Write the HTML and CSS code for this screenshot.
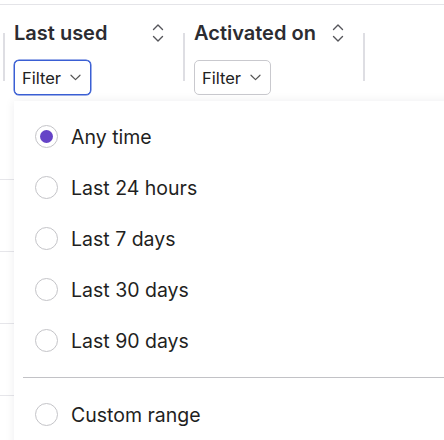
FILE: index.html
```html
<!DOCTYPE html>
<html lang="en">
<head>
    <meta charset="UTF-8">
    <meta name="viewport" content="width=device-width, initial-scale=1.0">
    <title>Members</title>
    <link rel="stylesheet" href="styles.css">
</head>
<body>
    <div class="table">
        <div class="table-head">
            <div class="th">
                <div class="th-sep"></div>
                <div class="th-body">
                    <div class="th-top">
                        <span class="th-label">Last used</span>
                        <svg class="sort-icon" width="12" height="20" viewBox="0 0 12 20"><path d="M1.5 6.5 6 2l4.5 4.5M1.5 13.5 6 18l4.5-4.5" fill="none" stroke="#55555a" stroke-width="1.4" stroke-linecap="round" stroke-linejoin="round"/></svg>
                    </div>
                    <button class="filter-btn is-open">Filter
                        <svg width="11" height="7" viewBox="0 0 11 7"><path d="M1 1.2 5.5 5.6 10 1.2" fill="none" stroke="#555" stroke-width="1.2" stroke-linecap="round" stroke-linejoin="round"/></svg>
                    </button>
                </div>
            </div>
            <div class="th">
                <div class="th-sep"></div>
                <div class="th-body">
                    <div class="th-top">
                        <span class="th-label">Activated on</span>
                        <svg class="sort-icon" width="12" height="20" viewBox="0 0 12 20"><path d="M1.5 6.5 6 2l4.5 4.5M1.5 13.5 6 18l4.5-4.5" fill="none" stroke="#55555a" stroke-width="1.4" stroke-linecap="round" stroke-linejoin="round"/></svg>
                    </div>
                    <button class="filter-btn">Filter
                        <svg width="11" height="7" viewBox="0 0 11 7"><path d="M1 1.2 5.5 5.6 10 1.2" fill="none" stroke="#555" stroke-width="1.2" stroke-linecap="round" stroke-linejoin="round"/></svg>
                    </button>
                </div>
            </div>
            <div class="th">
                <div class="th-sep"></div>
            </div>
        </div>
        <div class="table-row"></div>
        <div class="table-row"></div>
        <div class="table-row"></div>
        <div class="table-row"></div>
        <div class="table-row"></div>

        <div class="menu">
            <label class="menu-item"><span class="radio is-checked"></span>Any time</label>
            <label class="menu-item"><span class="radio"></span>Last 24 hours</label>
            <label class="menu-item"><span class="radio"></span>Last 7 days</label>
            <label class="menu-item"><span class="radio"></span>Last 30 days</label>
            <label class="menu-item"><span class="radio"></span>Last 90 days</label>
            <div class="menu-sep"></div>
            <label class="menu-item"><span class="radio"></span>Custom range</label>
        </div>
    </div>
</body>
</html>
```

FILE: styles.css
```css
body {
    margin: 0;
    font-family: Inter, "Noto Sans", sans-serif;
    background: #fff;
}

.table {
    position: relative;
    height: 435px;
    overflow: hidden;
    margin-top: 4px;
    border-top: 1px solid #e4e4e8;
}

.table-head {
    display: flex;
    padding-left: 3px;
    height: 103px;
}

.th {
    display: flex;
    width: 180px;
    flex-shrink: 0;
}

.th-sep {
    width: 2px;
    height: 48px;
    margin-top: 28px;
    background: #dedee3;
}

.th-body {
    width: 150px;
    padding: 16px 0 0 9px;
}

.th-top {
    display: flex;
    justify-content: space-between;
    align-items: center;
    height: 24px;
}

.th-label {
    font-size: 20px;
    font-weight: 600;
    line-height: 24px;
    color: #2c2c31;
}

.sort-icon {
    display: block;
}

.filter-btn {
    display: flex;
    align-items: center;
    gap: 9px;
    margin-top: 15px;
    height: 35px;
    padding: 0 9px 0 7px;
    border: 1px solid #c9c9ce;
    border-radius: 5px;
    background: #fff;
    font-family: inherit;
    font-size: 16.5px;
    color: #222;
}

.filter-btn.is-open {
    border-color: #3a5fd4;
    box-shadow: 0 0 0 0.5px #3a5fd4;
}

.table-row {
    height: 71px;
    border-bottom: 1px solid #e6e6ea;
}

.menu {
    position: absolute;
    top: 96px;
    left: 14px;
    right: -20px;
    bottom: -20px;
    padding-top: 10px;
    background: #fff;
    box-shadow: 0 0 10px rgba(20, 20, 40, 0.07);
}

.menu-item {
    display: flex;
    align-items: center;
    gap: 13px;
    height: 51px;
    padding-left: 21px;
    font-size: 19.5px;
    color: #1f1f22;
}

.radio {
    flex-shrink: 0;
    width: 23px;
    height: 23px;
    box-sizing: border-box;
    border: 1px solid #c4c4c8;
    border-radius: 50%;
    display: flex;
    align-items: center;
    justify-content: center;
}

.radio.is-checked::after {
    content: "";
    width: 13px;
    height: 13px;
    border-radius: 50%;
    background: #6543c7;
}

.menu-sep {
    height: 1px;
    margin: 11px 0 11px 9px;
    background: #c2c2c6;
}
```
